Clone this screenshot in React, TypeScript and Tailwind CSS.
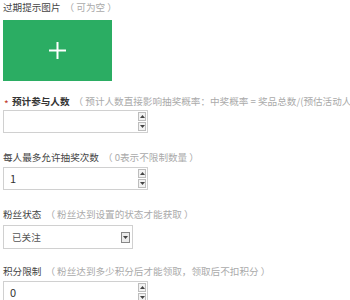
import React from 'react';

function Tri({ up }: { up?: boolean }) {
  return (
    <svg width="5" height="3" viewBox="0 0 5 3">
      <path d={up ? 'M2.5 0 L5 3 L0 3 Z' : 'M0 0 L5 0 L2.5 3 Z'} fill="#444" />
    </svg>
  );
}

function Label({ text, hint, required, className }: { text: string; hint: string; required?: boolean; className?: string }) {
  return (
    <div className={`flex items-center h-[14px] whitespace-nowrap ${className ?? ''}`}>
      {required && (
        <span className="shrink-0 w-[9px] pl-[1px] text-[#c0392b] text-[10px] relative top-[2px]">*</span>
      )}
      <span className={`shrink-0 ${required ? 'text-[#333] font-bold' : 'text-[#444]'}`}>{text}</span>
      <span className="shrink-0 text-[#aaa] ml-[4px]">{`（ ${hint} ）`}</span>
    </div>
  );
}

function NumberInput({ value, className }: { value?: string; className?: string }) {
  return (
    <div className={`flex items-center w-[145px] h-[23px] border border-[#d0d0d0] bg-white ${className ?? ''}`}>
      <span className="flex-1 pl-[6px] text-[11px] text-[#333]">{value}</span>
      <div className="flex flex-col gap-[1px] mr-[1px]">
        <div className="w-[8px] h-[9px] border border-[#bdbdbd] bg-[#f2f2f2] flex items-center justify-center">
          <Tri up />
        </div>
        <div className="w-[8px] h-[9px] border border-[#bdbdbd] bg-[#f2f2f2] flex items-center justify-center">
          <Tri />
        </div>
      </div>
    </div>
  );
}

export default function App() {
  return (
    <div className="w-[350px] h-[300px] overflow-hidden bg-white px-[3px] text-[9.6px] font-['Noto_Sans_CJK_SC',sans-serif]">
      <Label text="过期提示图片" hint="可为空" />
      <div className="mt-[6px] w-[109px] h-[61px] bg-[#2bad63] flex items-center justify-center">
        <svg width="17" height="17" viewBox="0 0 17 17">
          <path d="M8.5 0 V17 M0 8.5 H17" stroke="white" strokeWidth="2" />
        </svg>
      </div>

      <Label className="mt-[13px]" required text="预计参与人数" hint="预计人数直接影响抽奖概率：中奖概率 = 奖品总数/(预估活动人数*每人抽奖次数)" />
      <NumberInput className="mt-[2px]" />

      <Label className="mt-[17px]" text="每人最多允许抽奖次数" hint="0表示不限制数量" />
      <NumberInput className="mt-[3px]" value="1" />

      <Label className="mt-[17px]" text="粉丝状态" hint="粉丝达到设置的状态才能获取" />
      <div className="mt-[4px] flex items-center w-[130px] h-[24px] border border-[#d0d0d0] bg-white">
        <span className="flex-1 pl-[8px] text-[#555]">已关注</span>
        <div className="w-[9px] h-[11px] mr-[2px] border border-[#888] bg-[#ececec] flex items-center justify-center">
          <Tri />
        </div>
      </div>

      <Label className="mt-[15px]" text="积分限制" hint="粉丝达到多少积分后才能领取，领取后不扣积分" />
      <NumberInput className="mt-[3px]" value="0" />
    </div>
  );
}
